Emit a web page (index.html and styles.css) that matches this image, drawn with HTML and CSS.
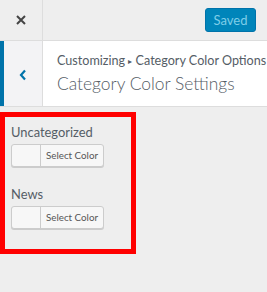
FILE: index.html
```html
<!DOCTYPE html>
<html>
<head>
<meta charset="utf-8">
<link rel="stylesheet" href="styles.css">
</head>
<body>
<div class="topbar">
  <div class="close">
    <svg width="10" height="10" viewBox="0 0 10 10"><path d="M1 1L9 9M9 1L1 9" stroke="#444" stroke-width="2"/></svg>
  </div>
  <div class="saved">Saved</div>
</div>
<div class="header">
  <div class="back">
    <svg width="8" height="12" viewBox="0 0 8 12"><path d="M6 1.5L2 6L6 10.5" fill="none" stroke="#0073aa" stroke-width="2.2"/></svg>
  </div>
  <div class="titles">
    <div class="crumb">Customizing <span class="tri">▸</span> Category Color Options</div>
    <div class="title">Category Color Settings</div>
  </div>
</div>
<div class="controls">
  <div class="control">
    <div class="label">Uncategorized</div>
    <div class="picker"><span class="swatch"></span><span class="pick-text">Select Color</span></div>
  </div>
  <div class="control">
    <div class="label">News</div>
    <div class="picker"><span class="swatch"></span><span class="pick-text">Select Color</span></div>
  </div>
</div>
</body>
</html>
```
FILE: styles.css
```css
html, body {
  margin: 0;
  padding: 0;
  background: #eeeeee;
  font-family: Lato, "Open Sans", sans-serif;
  color: #555d66;
}
.topbar {
  height: 40px;
  border-bottom: 1px solid #dddddd;
  display: flex;
  align-items: center;
  justify-content: space-between;
}
.close {
  width: 43px;
  height: 40px;
  flex-shrink: 0;
  border-right: 1px solid #dddddd;
  display: flex;
  align-items: center;
  justify-content: center;
  box-sizing: border-box;
}
.saved {
  width: 51px;
  height: 24px;
  box-sizing: border-box;
  margin-right: 11px;
  background: #0085ba;
  border: 1px solid #0073aa;
  border-radius: 3px;
  color: #7fcde8;
  font-size: 13px;
  line-height: 22px;
  text-align: center;
}
.header {
  height: 65px;
  background: #ffffff;
  border-bottom: 1px solid #dddddd;
  display: flex;
}
.back {
  width: 43px;
  flex-shrink: 0;
  box-sizing: border-box;
  border-left: 4px solid #0073aa;
  border-right: 1px solid #dddddd;
  background: #f3f3f5;
  display: flex;
  align-items: center;
  justify-content: center;
  padding-top: 2px;
}
.titles {
  padding: 11px 0 0 14px;
  white-space: nowrap;
}
.crumb {
  font-size: 12.6px;
  line-height: 18px;
}
.tri {
  font-size: 8px;
  vertical-align: 1px;
}
.title {
  margin-top: 2px;
  font-size: 17.4px;
  font-weight: 300;
  line-height: 24px;
}
.controls {
  margin-top: 5px;
  width: 136px;
  height: 142px;
  box-sizing: border-box;
  border: 5px solid #ff0000;
  padding: 5px 0 0 6px;
  display: flex;
  flex-direction: column;
  gap: 17px;
}
.label {
  font-size: 12.9px;
  line-height: 20px;
  margin-bottom: 2px;
}
.picker {
  width: 93px;
  height: 23px;
  box-sizing: border-box;
  border: 1px solid #cccccc;
  border-radius: 3px;
  background: #f7f7f7;
  box-shadow: 0 1px 0 #cccccc;
  display: flex;
}
.swatch {
  width: 28px;
  border-right: 1px solid #cccccc;
}
.pick-text {
  flex: 1;
  font-size: 9.8px;
  line-height: 21px;
  text-align: center;
  color: #555555;
}
```
